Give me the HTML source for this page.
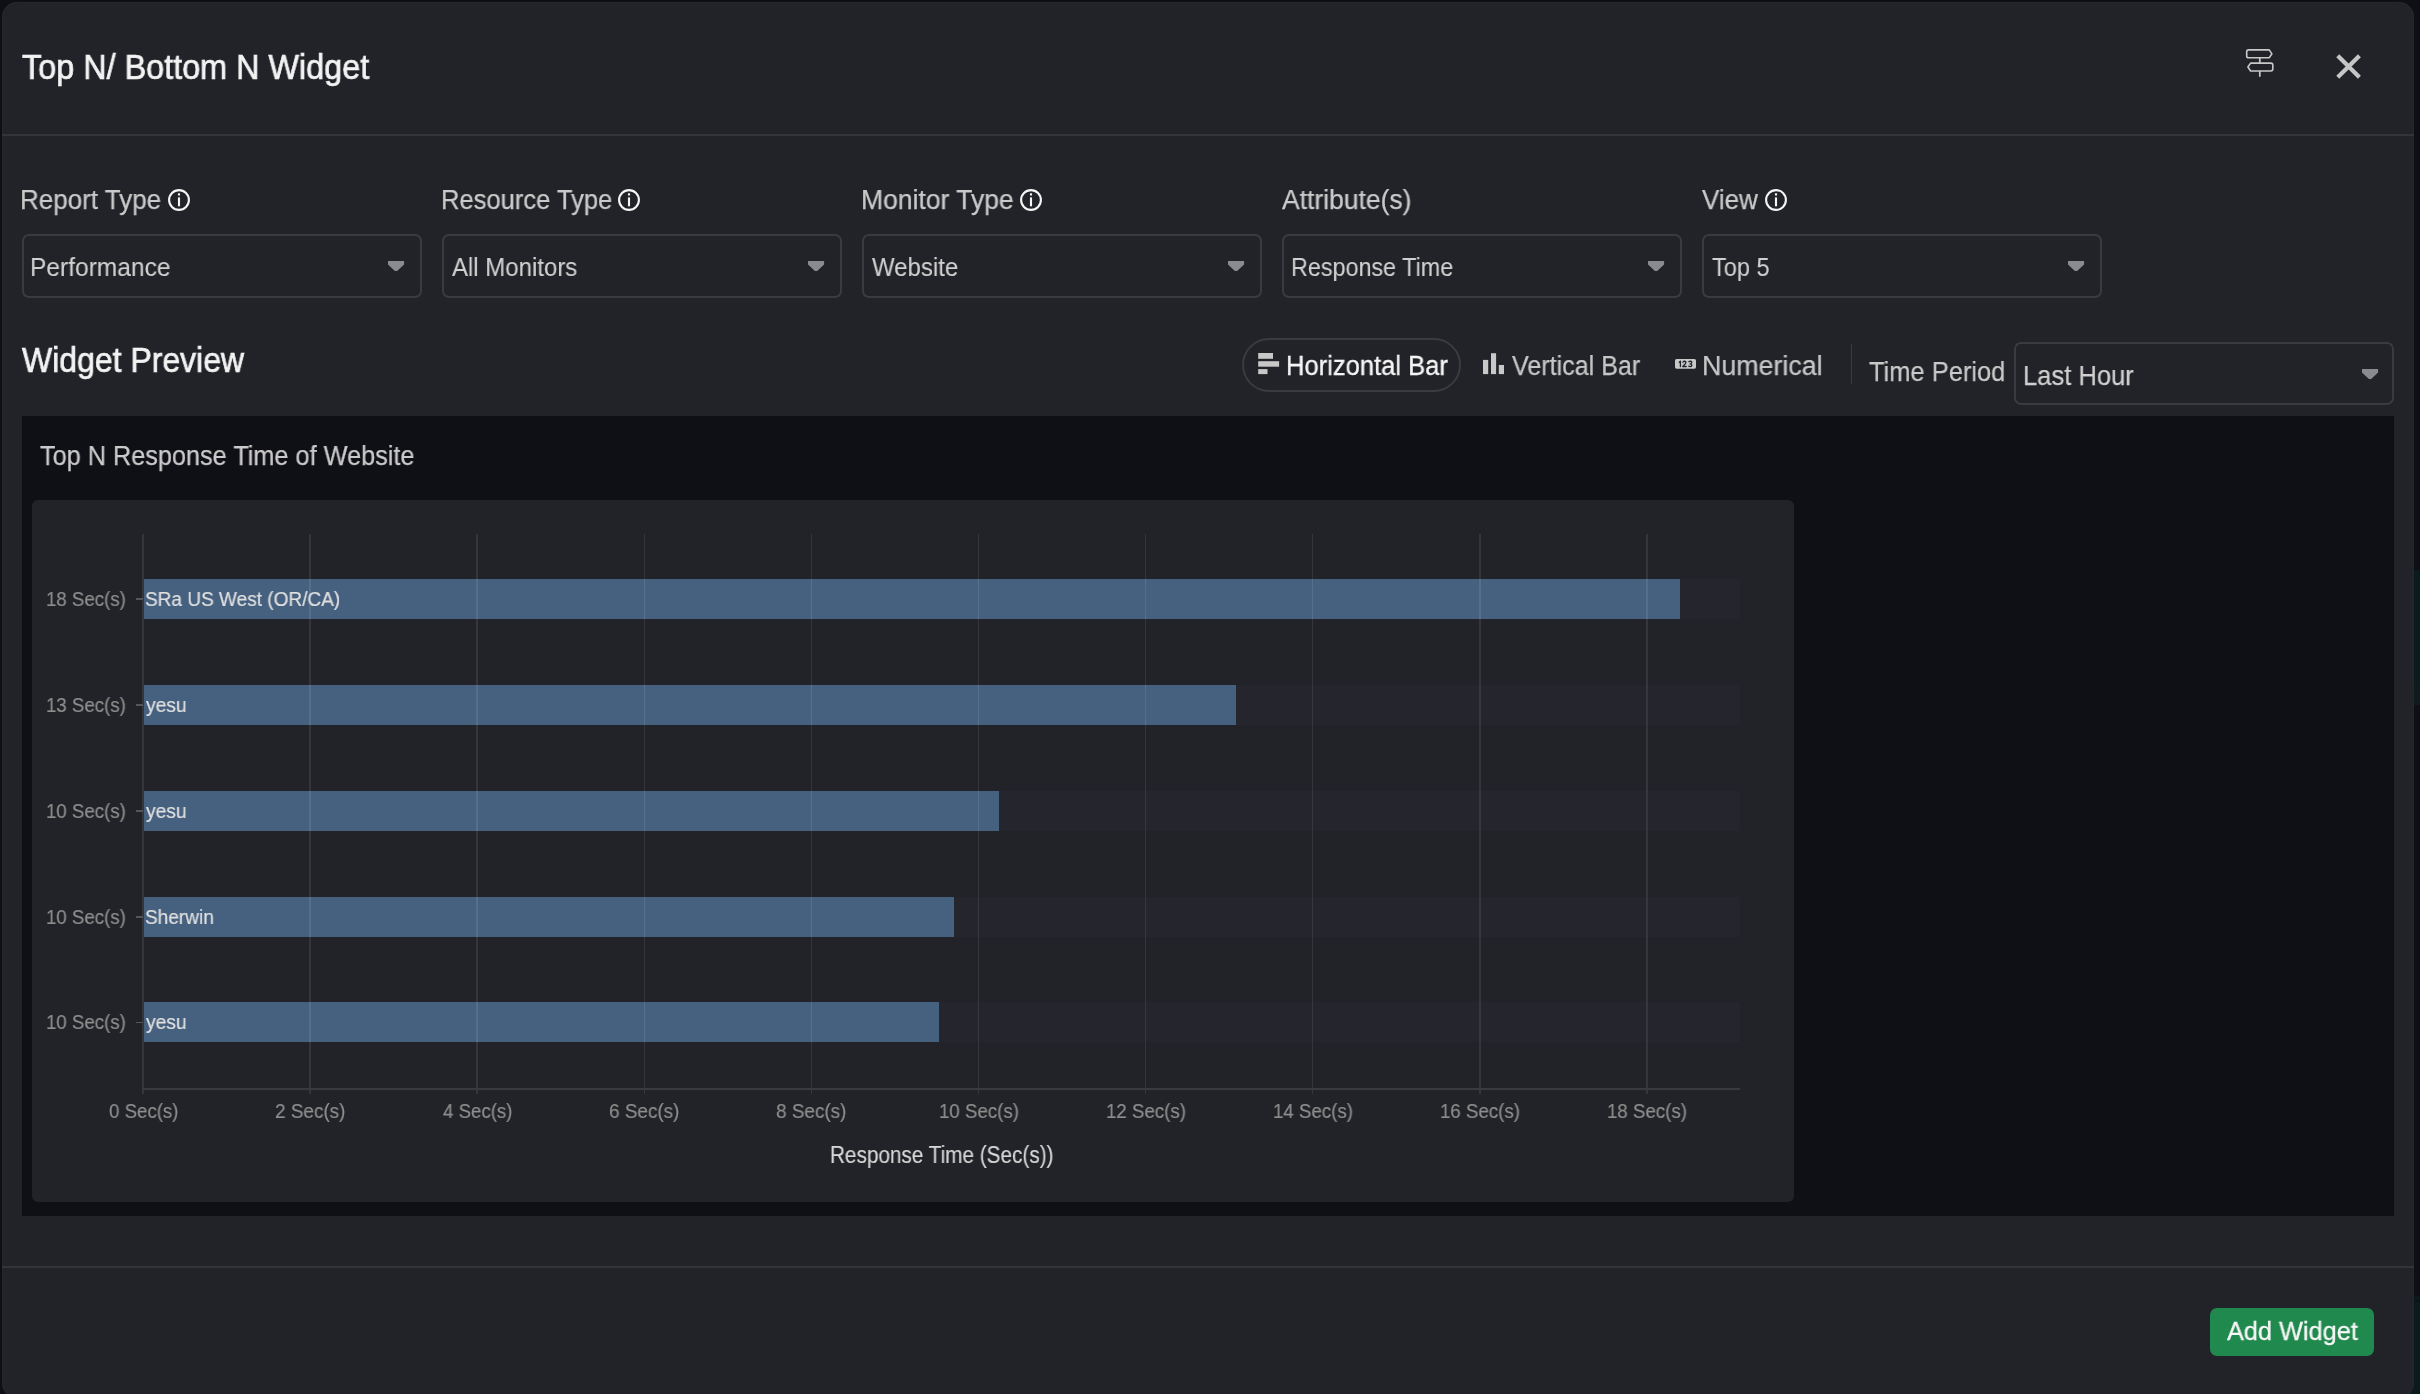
<!DOCTYPE html><html><head><meta charset="utf-8"><style>
html,body{margin:0;padding:0;}
body{width:2420px;height:1394px;overflow:hidden;background:#0e0f15;position:relative;font-family:"Liberation Sans",sans-serif;}
.t{position:absolute;white-space:nowrap;will-change:transform;transform-origin:0 0;}
.a{position:absolute;}
</style></head><body>
<div class="a" style="left:2300px;top:570px;width:120px;height:113px;background:#0b1a1c;"></div><div class="a" style="left:2300px;top:683px;width:120px;height:22px;background:#101a1d;"></div><div class="a" style="left:2300px;top:1296px;width:120px;height:98px;background:#0b1a1c;"></div><div class="a" style="left:2300px;top:1300px;width:120px;height:2px;background:#0e1316;"></div><div class="a" style="left:2px;top:2px;width:2412px;height:1396px;background:#222328;border-radius:15px;box-shadow:inset 0 0 0 1px #26272c;"></div><svg class="a" style="left:2240px;top:44px" width="40" height="40" viewBox="2240 44 40 40">
<path d="M2248.6 49.9 H2269.2 L2271.9 53.85 L2269.2 57.8 H2248.6 Q2246.7 57.8 2246.7 55.9 V51.8 Q2246.7 49.9 2248.6 49.9 Z" fill="none" stroke="#c8c8c8" stroke-width="1.6" stroke-linejoin="round"/>
<path d="M2250.6 63.1 H2270.9 Q2272.8 63.1 2272.8 65 V69.1 Q2272.8 71 2270.9 71 H2250.6 L2247.9 67.05 Z" fill="none" stroke="#c8c8c8" stroke-width="1.6" stroke-linejoin="round"/>
<path d="M2259.8 57.8 V63.1 M2259.8 71 V76.8" stroke="#c8c8c8" stroke-width="1.7"/>
</svg><svg class="a" style="left:2330px;top:48px" width="40" height="40" viewBox="2330 48 40 40">
<path d="M2337.75 55.7 L2359.4 77.35 M2359.4 55.7 L2337.75 77.35" stroke="#c6c6c6" stroke-width="4.2"/>
</svg><div class="a" style="left:2px;top:134px;width:2412px;height:1.6px;background:#333439;"></div><svg class="a" style="left:167.8px;top:188.7px" width="22" height="22" viewBox="0 0 22 22">
<circle cx="11" cy="11" r="9.9" fill="none" stroke="#f5f5f5" stroke-width="2.1"/>
<rect x="9.95" y="4.3" width="2.1" height="2.2" fill="#f5f5f5"/><rect x="9.95" y="8.4" width="2.1" height="8.9" fill="#f5f5f5"/></svg><svg class="a" style="left:618.2px;top:188.7px" width="22" height="22" viewBox="0 0 22 22">
<circle cx="11" cy="11" r="9.9" fill="none" stroke="#f5f5f5" stroke-width="2.1"/>
<rect x="9.95" y="4.3" width="2.1" height="2.2" fill="#f5f5f5"/><rect x="9.95" y="8.4" width="2.1" height="8.9" fill="#f5f5f5"/></svg><svg class="a" style="left:1020px;top:188.7px" width="22" height="22" viewBox="0 0 22 22">
<circle cx="11" cy="11" r="9.9" fill="none" stroke="#f5f5f5" stroke-width="2.1"/>
<rect x="9.95" y="4.3" width="2.1" height="2.2" fill="#f5f5f5"/><rect x="9.95" y="8.4" width="2.1" height="8.9" fill="#f5f5f5"/></svg><svg class="a" style="left:1765px;top:188.7px" width="22" height="22" viewBox="0 0 22 22">
<circle cx="11" cy="11" r="9.9" fill="none" stroke="#f5f5f5" stroke-width="2.1"/>
<rect x="9.95" y="4.3" width="2.1" height="2.2" fill="#f5f5f5"/><rect x="9.95" y="8.4" width="2.1" height="8.9" fill="#f5f5f5"/></svg><div class="a" style="left:22px;top:234px;width:400px;height:64px;box-sizing:border-box;border:2px solid #3a3b40;border-radius:7px;"></div><svg class="a" style="left:388px;top:260.8px" width="17" height="11" viewBox="0 0 17 11"><path d="M0 0 H16.1 V3.5 L9.2 10.1 H6.9 L0 3.5 Z" fill="#898b8f"/></svg><div class="a" style="left:442px;top:234px;width:400px;height:64px;box-sizing:border-box;border:2px solid #3a3b40;border-radius:7px;"></div><svg class="a" style="left:808px;top:260.8px" width="17" height="11" viewBox="0 0 17 11"><path d="M0 0 H16.1 V3.5 L9.2 10.1 H6.9 L0 3.5 Z" fill="#898b8f"/></svg><div class="a" style="left:862px;top:234px;width:400px;height:64px;box-sizing:border-box;border:2px solid #3a3b40;border-radius:7px;"></div><svg class="a" style="left:1228px;top:260.8px" width="17" height="11" viewBox="0 0 17 11"><path d="M0 0 H16.1 V3.5 L9.2 10.1 H6.9 L0 3.5 Z" fill="#898b8f"/></svg><div class="a" style="left:1282px;top:234px;width:400px;height:64px;box-sizing:border-box;border:2px solid #3a3b40;border-radius:7px;"></div><svg class="a" style="left:1648px;top:260.8px" width="17" height="11" viewBox="0 0 17 11"><path d="M0 0 H16.1 V3.5 L9.2 10.1 H6.9 L0 3.5 Z" fill="#898b8f"/></svg><div class="a" style="left:1702px;top:234px;width:400px;height:64px;box-sizing:border-box;border:2px solid #3a3b40;border-radius:7px;"></div><svg class="a" style="left:2068px;top:260.8px" width="17" height="11" viewBox="0 0 17 11"><path d="M0 0 H16.1 V3.5 L9.2 10.1 H6.9 L0 3.5 Z" fill="#898b8f"/></svg><div class="a" style="left:1242px;top:338px;width:219px;height:54px;box-sizing:border-box;border:2px solid #3a3b40;border-radius:27px;"></div><svg class="a" style="left:1258px;top:353px" width="22" height="22" viewBox="1258 353 22 22">
<rect x="1258.2" y="353" width="14.8" height="5.8" fill="#c8c8c8"/>
<rect x="1258.2" y="361.2" width="20.9" height="5.5" fill="#c8c8c8"/>
<rect x="1258.2" y="369.1" width="9.3" height="5" fill="#c8c8c8"/></svg><svg class="a" style="left:1483px;top:353px" width="22" height="22" viewBox="1483 353 22 22">
<rect x="1483" y="359.9" width="5.2" height="14.2" fill="#c8c8c8"/>
<rect x="1491" y="353.2" width="5.1" height="20.9" fill="#c8c8c8"/>
<rect x="1498.8" y="365" width="5.2" height="9.1" fill="#c8c8c8"/></svg><svg class="a" style="left:1675px;top:359px" width="21" height="10" viewBox="0 0 21 10">
<rect x="0" y="0" width="21" height="9.7" rx="1.6" fill="#c8c8c8"/>
<path d="M4.3 3.2 L5.4 2.3 V7.6 M7.9 3.1 Q8.6 2.2 9.6 2.2 Q10.9 2.3 10.9 3.5 Q10.8 4.6 7.8 7.5 H11.2 M13.9 2.6 Q14.6 2.2 15.4 2.2 Q16.8 2.3 16.7 3.5 Q16.6 4.6 15.1 4.8 Q16.9 5 16.9 6.2 Q16.8 7.6 15.2 7.6 Q14.3 7.6 13.7 7.1" fill="none" stroke="#23252c" stroke-width="1.35" stroke-linecap="round" stroke-linejoin="round"/></svg><div class="a" style="left:1850.5px;top:344px;width:1.6px;height:40px;background:#393a3f;"></div><div class="a" style="left:2014px;top:342px;width:380px;height:63px;box-sizing:border-box;border:2px solid #3a3b40;border-radius:7px;"></div><svg class="a" style="left:2361.5px;top:368.8px" width="17" height="11" viewBox="0 0 17 11"><path d="M0 0 H16.1 V3.5 L9.2 10.1 H6.9 L0 3.5 Z" fill="#898b8f"/></svg><div class="a" style="left:22px;top:416px;width:2372px;height:800px;background:#0f0f16;"></div><div class="a" style="left:32px;top:500px;width:1762px;height:702px;background:#222328;border-radius:6px;"></div><div class="a" style="left:144px;top:579.0px;width:1596px;height:40px;background:#24252d;"></div><div class="a" style="left:144px;top:579.0px;width:1536px;height:40px;background:#46607f;"></div><div class="a" style="left:144px;top:685.0px;width:1596px;height:40px;background:#24252d;"></div><div class="a" style="left:144px;top:685.0px;width:1092px;height:40px;background:#46607f;"></div><div class="a" style="left:144px;top:791.0px;width:1596px;height:40px;background:#24252d;"></div><div class="a" style="left:144px;top:791.0px;width:855px;height:40px;background:#46607f;"></div><div class="a" style="left:144px;top:897.0px;width:1596px;height:40px;background:#24252d;"></div><div class="a" style="left:144px;top:897.0px;width:810px;height:40px;background:#46607f;"></div><div class="a" style="left:144px;top:1002.3px;width:1596px;height:40px;background:#24252d;"></div><div class="a" style="left:144px;top:1002.3px;width:795px;height:40px;background:#46607f;"></div><div class="a" style="left:142.25px;top:534px;width:1.5px;height:559.5px;background:rgba(255,255,255,0.09);"></div><div class="a" style="left:309.35px;top:534px;width:1.5px;height:559.5px;background:rgba(255,255,255,0.09);"></div><div class="a" style="left:476.45px;top:534px;width:1.5px;height:559.5px;background:rgba(255,255,255,0.09);"></div><div class="a" style="left:643.55px;top:534px;width:1.5px;height:559.5px;background:rgba(255,255,255,0.09);"></div><div class="a" style="left:810.65px;top:534px;width:1.5px;height:559.5px;background:rgba(255,255,255,0.09);"></div><div class="a" style="left:977.75px;top:534px;width:1.5px;height:559.5px;background:rgba(255,255,255,0.09);"></div><div class="a" style="left:1144.85px;top:534px;width:1.5px;height:559.5px;background:rgba(255,255,255,0.09);"></div><div class="a" style="left:1311.95px;top:534px;width:1.5px;height:559.5px;background:rgba(255,255,255,0.09);"></div><div class="a" style="left:1479.05px;top:534px;width:1.5px;height:559.5px;background:rgba(255,255,255,0.09);"></div><div class="a" style="left:1646.15px;top:534px;width:1.5px;height:559.5px;background:rgba(255,255,255,0.09);"></div><div class="a" style="left:142px;top:1087.5px;width:1598px;height:2px;background:#393a3f;"></div><div class="a" style="left:136px;top:598.2px;width:7px;height:1.6px;background:#55565b;"></div><div class="a" style="left:136px;top:704.2px;width:7px;height:1.6px;background:#55565b;"></div><div class="a" style="left:136px;top:810.2px;width:7px;height:1.6px;background:#55565b;"></div><div class="a" style="left:136px;top:916.2px;width:7px;height:1.6px;background:#55565b;"></div><div class="a" style="left:136px;top:1021.5px;width:7px;height:1.6px;background:#55565b;"></div><div class="a" style="left:2px;top:1266.2px;width:2412px;height:1.8px;background:#333439;"></div><div class="a" style="left:2210px;top:1308px;width:164px;height:48px;background:#20894d;border-radius:7px;"></div><div class="t" style="left:21.8px;top:49.45px;font-size:35px;line-height:35px;color:#f3f3f3;-webkit-text-stroke:0.7px #f3f3f3;transform:scaleX(0.9247);">Top N/ Bottom N Widget</div>
<div class="t" style="left:20.07px;top:187.15px;font-size:27px;line-height:27px;color:#cacaca;-webkit-text-stroke:0.25px #cacaca;transform:scaleX(0.9632);">Report Type</div>
<div class="t" style="left:441.11px;top:187.15px;font-size:27px;line-height:27px;color:#cacaca;-webkit-text-stroke:0.25px #cacaca;transform:scaleX(0.9461);">Resource Type</div>
<div class="t" style="left:861.04px;top:187.15px;font-size:27px;line-height:27px;color:#cacaca;-webkit-text-stroke:0.25px #cacaca;transform:scaleX(0.9817);">Monitor Type</div>
<div class="t" style="left:1282.1px;top:187.15px;font-size:27px;line-height:27px;color:#cacaca;-webkit-text-stroke:0.25px #cacaca;transform:scaleX(0.9809);">Attribute(s)</div>
<div class="t" style="left:1702.1px;top:187.15px;font-size:27px;line-height:27px;color:#cacaca;-webkit-text-stroke:0.25px #cacaca;transform:scaleX(0.9621);">View</div>
<div class="t" style="left:30.31px;top:253.80px;font-size:26px;line-height:26px;color:#d0d0d0;-webkit-text-stroke:0.1px #d0d0d0;transform:scaleX(0.9432);">Performance</div>
<div class="t" style="left:452.1px;top:253.80px;font-size:26px;line-height:26px;color:#d0d0d0;-webkit-text-stroke:0.1px #d0d0d0;transform:scaleX(0.9222);">All Monitors</div>
<div class="t" style="left:872.1px;top:253.80px;font-size:26px;line-height:26px;color:#d0d0d0;-webkit-text-stroke:0.1px #d0d0d0;transform:scaleX(0.9226);">Website</div>
<div class="t" style="left:1290.9px;top:253.80px;font-size:26px;line-height:26px;color:#d0d0d0;-webkit-text-stroke:0.1px #d0d0d0;transform:scaleX(0.8978);">Response Time</div>
<div class="t" style="left:1712.1px;top:253.80px;font-size:26px;line-height:26px;color:#d0d0d0;-webkit-text-stroke:0.1px #d0d0d0;transform:scaleX(0.9048);">Top 5</div>
<div class="t" style="left:22.0px;top:342.45px;font-size:35px;line-height:35px;color:#f3f3f3;-webkit-text-stroke:0.7px #f3f3f3;transform:scaleX(0.9135);">Widget Preview</div>
<div class="t" style="left:1285.91px;top:353.35px;font-size:27px;line-height:27px;color:#f5f5f5;-webkit-text-stroke:0.3px #f5f5f5;transform:scaleX(0.9467);">Horizontal Bar</div>
<div class="t" style="left:1511.8px;top:353.35px;font-size:27px;line-height:27px;color:#c6c6c6;-webkit-text-stroke:0.25px #c6c6c6;transform:scaleX(0.929);">Vertical Bar</div>
<div class="t" style="left:1701.52px;top:353.35px;font-size:27px;line-height:27px;color:#c6c6c6;-webkit-text-stroke:0.25px #c6c6c6;transform:scaleX(0.9924);">Numerical</div>
<div class="t" style="left:1869.0px;top:358.40px;font-size:28px;line-height:28px;color:#cacaca;-webkit-text-stroke:0.25px #cacaca;transform:scaleX(0.9095);">Time Period</div>
<div class="t" style="left:2023.17px;top:362.10px;font-size:28px;line-height:28px;color:#d0d0d0;-webkit-text-stroke:0.25px #d0d0d0;transform:scaleX(0.9126);">Last Hour</div>
<div class="t" style="left:40.0px;top:442.65px;font-size:27px;line-height:27px;color:#cacaca;-webkit-text-stroke:0.25px #cacaca;transform:scaleX(0.9356);">Top N Response Time of Website</div>
<div class="t" style="left:829.5px;top:1143.75px;font-size:23px;line-height:23px;color:#d6d6d6;-webkit-text-stroke:0.2px #d6d6d6;transform:scaleX(0.9012);">Response Time (Sec(s))</div>
<div class="t" style="left:2226.6px;top:1317.70px;font-size:26px;line-height:26px;color:#f7f7f7;-webkit-text-stroke:0.3px #f7f7f7;transform:scaleX(0.9733);">Add Widget</div>
<div class="t" style="left:46.37px;top:588.80px;font-size:20px;line-height:20px;color:#8e8e8e;-webkit-text-stroke:0.2px #8e8e8e;transform:scaleX(0.9321);">18 Sec(s)</div>
<div class="t" style="left:145.45px;top:588.80px;font-size:20px;line-height:20px;color:#e0e0e0;-webkit-text-stroke:0.2px #e0e0e0;transform:scaleX(0.9512);">SRa US West (OR/CA)</div>
<div class="t" style="left:46.37px;top:694.80px;font-size:20px;line-height:20px;color:#8e8e8e;-webkit-text-stroke:0.2px #8e8e8e;transform:scaleX(0.9321);">13 Sec(s)</div>
<div class="t" style="left:146.4px;top:694.80px;font-size:20px;line-height:20px;color:#e0e0e0;-webkit-text-stroke:0.2px #e0e0e0;transform:scaleX(0.9634);">yesu</div>
<div class="t" style="left:46.37px;top:800.80px;font-size:20px;line-height:20px;color:#8e8e8e;-webkit-text-stroke:0.2px #8e8e8e;transform:scaleX(0.9321);">10 Sec(s)</div>
<div class="t" style="left:146.4px;top:800.80px;font-size:20px;line-height:20px;color:#e0e0e0;-webkit-text-stroke:0.2px #e0e0e0;transform:scaleX(0.9634);">yesu</div>
<div class="t" style="left:46.37px;top:906.80px;font-size:20px;line-height:20px;color:#8e8e8e;-webkit-text-stroke:0.2px #8e8e8e;transform:scaleX(0.9321);">10 Sec(s)</div>
<div class="t" style="left:145.45px;top:906.80px;font-size:20px;line-height:20px;color:#e0e0e0;-webkit-text-stroke:0.2px #e0e0e0;transform:scaleX(0.9521);">Sherwin</div>
<div class="t" style="left:46.37px;top:1012.10px;font-size:20px;line-height:20px;color:#8e8e8e;-webkit-text-stroke:0.2px #8e8e8e;transform:scaleX(0.9321);">10 Sec(s)</div>
<div class="t" style="left:146.4px;top:1012.10px;font-size:20px;line-height:20px;color:#e0e0e0;-webkit-text-stroke:0.2px #e0e0e0;transform:scaleX(0.9634);">yesu</div>
<div class="t" style="left:108.9px;top:1101.00px;font-size:20px;line-height:20px;color:#8e8e8e;-webkit-text-stroke:0.2px #8e8e8e;transform:scaleX(0.9324);">0 Sec(s)</div>
<div class="t" style="left:275.05px;top:1101.00px;font-size:20px;line-height:20px;color:#8e8e8e;-webkit-text-stroke:0.2px #8e8e8e;transform:scaleX(0.9452);">2 Sec(s)</div>
<div class="t" style="left:443.1px;top:1101.00px;font-size:20px;line-height:20px;color:#8e8e8e;-webkit-text-stroke:0.2px #8e8e8e;transform:scaleX(0.9324);">4 Sec(s)</div>
<div class="t" style="left:609.25px;top:1101.00px;font-size:20px;line-height:20px;color:#8e8e8e;-webkit-text-stroke:0.2px #8e8e8e;transform:scaleX(0.9452);">6 Sec(s)</div>
<div class="t" style="left:776.35px;top:1101.00px;font-size:20px;line-height:20px;color:#8e8e8e;-webkit-text-stroke:0.2px #8e8e8e;transform:scaleX(0.9452);">8 Sec(s)</div>
<div class="t" style="left:938.77px;top:1101.00px;font-size:20px;line-height:20px;color:#8e8e8e;-webkit-text-stroke:0.2px #8e8e8e;transform:scaleX(0.9333);">10 Sec(s)</div>
<div class="t" style="left:1105.87px;top:1101.00px;font-size:20px;line-height:20px;color:#8e8e8e;-webkit-text-stroke:0.2px #8e8e8e;transform:scaleX(0.9333);">12 Sec(s)</div>
<div class="t" style="left:1272.97px;top:1101.00px;font-size:20px;line-height:20px;color:#8e8e8e;-webkit-text-stroke:0.2px #8e8e8e;transform:scaleX(0.9333);">14 Sec(s)</div>
<div class="t" style="left:1440.07px;top:1101.00px;font-size:20px;line-height:20px;color:#8e8e8e;-webkit-text-stroke:0.2px #8e8e8e;transform:scaleX(0.9333);">16 Sec(s)</div>
<div class="t" style="left:1607.17px;top:1101.00px;font-size:20px;line-height:20px;color:#8e8e8e;-webkit-text-stroke:0.2px #8e8e8e;transform:scaleX(0.9333);">18 Sec(s)</div>
</body></html>
